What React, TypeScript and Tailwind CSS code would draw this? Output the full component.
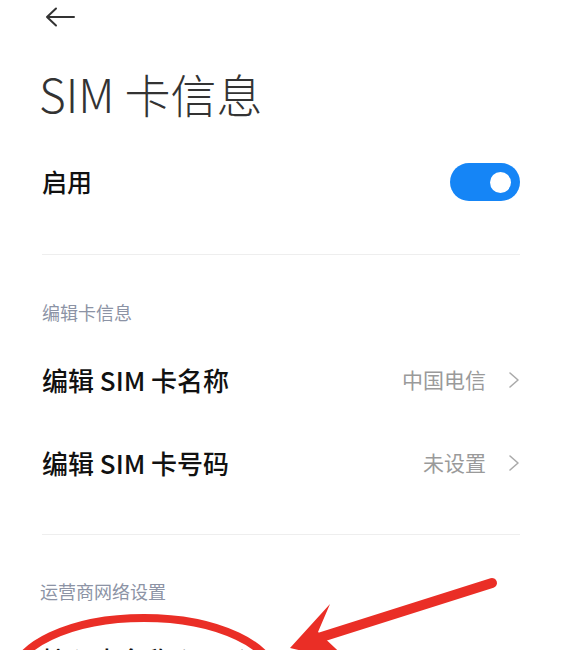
import React from "react";

const font = { fontFamily: '"Noto Sans CJK SC", "Noto Sans", sans-serif' };

function Chevron() {
  return (
    <svg width="12" height="18" viewBox="0 0 12 18" fill="none" className="ml-[22px]">
      <path d="M2 2 L10 9 L2 16" stroke="#aaaaaa" strokeWidth="1.6" strokeLinecap="round" strokeLinejoin="round" />
    </svg>
  );
}

function Row({ label, value }: { label: string; value: string }) {
  return (
    <div className="h-[83px] flex items-center justify-between">
      <span className="text-[26px] font-medium text-[#111]">{label}</span>
      <div className="flex items-center">
        <span className="text-[21px] text-[#9a9a9a]">{value}</span>
        <Chevron />
      </div>
    </div>
  );
}

export default function App() {
  return (
    <div className="relative w-[562px] h-[650px] overflow-hidden bg-white" style={font}>
      {/* top bar */}
      <div className="h-[34px] flex items-center pl-[45px]">
        <svg width="30" height="20" viewBox="0 0 30 20" fill="none">
          <path d="M2 10 H29 M11 1.5 L2 10 L11 18.5" stroke="#333" strokeWidth="2" strokeLinecap="round" strokeLinejoin="round" />
        </svg>
      </div>

      <div className="px-[42px]">
        <h1 className="mt-[30px] text-[46px] leading-[58px] font-light text-[#333] -ml-[3px]">SIM 卡信息</h1>

        <div className="mt-[18px] h-[84px] flex items-center justify-between">
          <span className="text-[25px] font-medium text-[#111]">启用</span>
          <div className="w-[70px] h-[38px] rounded-full bg-[#1585f6] flex items-center justify-end pr-[9px]">
            <div className="w-[21px] h-[21px] rounded-full bg-white" />
          </div>
        </div>

        <div className="mt-[30px] h-px bg-[#eeeeee]" />

        <div className="mt-[37px] h-[40px] flex items-center text-[18px] text-[#8c93a5]">编辑卡信息</div>

        <div className="mt-[6px]">
          <Row label="编辑 SIM 卡名称" value="中国电信" />
          <Row label="编辑 SIM 卡号码" value="未设置" />
        </div>

        <div className="mt-[30px] h-px bg-[#eeeeee]" />

        <div className="mt-[36px] h-[40px] flex items-center text-[18px] text-[#8c93a5] -ml-[2px]">运营商网络设置</div>

        <div className="mt-[7px]">
          <Row label="接入点名称 (APN)" value="" />
        </div>
      </div>

      {/* red annotation overlay */}
      <svg className="absolute inset-0 pointer-events-none" width="562" height="650" viewBox="0 0 562 650" fill="none">
        <ellipse cx="144" cy="680" rx="132" ry="62" stroke="#ea2e26" strokeWidth="8" />
        <path d="M492 583 L312 640" stroke="#ea2e26" strokeWidth="10" strokeLinecap="round" />
        <polygon points="290,648 330,604 318,632 350,662" fill="#ea2e26" />
      </svg>
    </div>
  );
}
